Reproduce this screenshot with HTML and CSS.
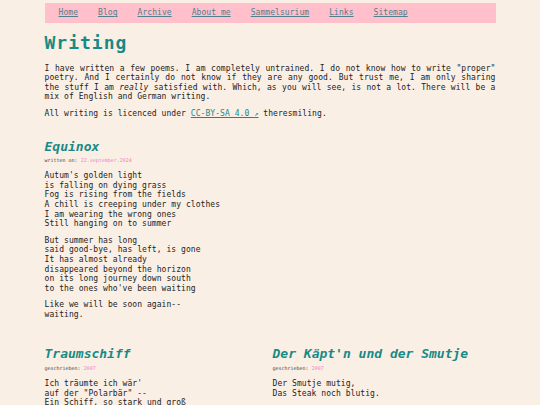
FILE: index.html
```html
<!DOCTYPE html>
<html lang="en">
<head>
    <meta charset="UTF-8">
    <meta name="viewport" content="width=device-width, initial-scale=1.0">
    <title>Writing</title>
    <link rel="stylesheet" href="styles.css">
</head>
<body>
    <div class="page">
        <nav class="topnav">
            <a href="#">Home</a>
            <a href="#">Blog</a>
            <a href="#">Archive</a>
            <a href="#">About me</a>
            <a href="#">Sammelsurium</a>
            <a href="#">Links</a>
            <a href="#">Sitemap</a>
        </nav>

        <h1>Writing</h1>

        <p class="intro">I have written a few poems. I am completely untrained. I do not know how to write "proper" poetry. And I certainly do not know if they are any good. But trust me, I am only sharing the stuff I am <em>really</em> satisfied with. Which, as you will see, is not a lot. There will be a mix of English and German writing.</p>
        <p>All writing is licenced under <a href="#" class="ext">CC-BY-SA 4.0 <span class="arrow">&#8599;</span></a> theresmiling.</p>

        <div class="poem">
            <h2>Equinox</h2>
            <div class="meta">written on: <span class="date">22.september.2024</span></div>
            <p>Autum's golden light<br>is falling on dying grass<br>Fog is rising from the fields<br>A chill is creeping under my clothes<br>I am wearing the wrong ones<br>Still hanging on to summer</p>
            <p>But summer has long<br>said good-bye, has left, is gone<br>It has almost already<br>disappeared beyond the horizon<br>on its long journey down south<br>to the ones who've been waiting</p>
            <p>Like we will be soon again--<br>waiting.</p>
        </div>

        <div class="poem-grid">
            <div class="poem">
                <h2>Traumschiff</h2>
                <div class="meta">geschrieben: <span class="date">2007</span></div>
                <p>Ich träumte ich wär'<br>auf der "Polarbär" --<br>Ein Schiff, so stark und groß</p>
            </div>
            <div class="poem">
                <h2>Der Käpt'n und der Smutje</h2>
                <div class="meta">geschrieben: <span class="date">2007</span></div>
                <p>Der Smutje mutig,<br>Das Steak noch blutig.</p>
            </div>
        </div>
    </div>
</body>
</html>
```

FILE: styles.css
```css
body {
    margin: 0;
    background-color: #faefe5;
    color: #222;
    font-family: "DejaVu Sans Mono", monospace;
    font-size: 8px;
    letter-spacing: 0.06px;
    line-height: 1.2;
}
.page {
    max-width: 451px;
    margin: 0 auto;
    padding-top: 3px;
}
.topnav {
    display: flex;
    align-items: center;
    gap: 20px;
    height: 20px;
    padding: 0 14px;
    background-color: #ffc0cb;
}
.topnav a {
    color: #4f7f8c;
}
h1 {
    color: #178a86;
    font-size: 18px;
    letter-spacing: 1px;
    margin: 9px 0 10px;
}
p {
    margin: 7px 0;
}
.intro {
    text-align: justify;
}
.ext {
    color: #178a86;
}
.arrow {
    font-size: 7px;
}
h2 {
    color: #178a86;
    font-size: 13px;
    font-style: italic;
    letter-spacing: 0;
    margin: 20px 0 3px;
}
.meta {
    font-size: 5px;
    letter-spacing: 0;
    color: #444;
}
.date {
    color: #ef7fc4;
}
.poem p {
    margin: 7px 0;
}
.poem .meta + p {
    margin-top: 8px;
}
.poem-grid {
    display: grid;
    grid-template-columns: 1fr 1fr;
    gap: 5px;
}
.poem-grid h2 {
    margin-top: 20px;
}
```
